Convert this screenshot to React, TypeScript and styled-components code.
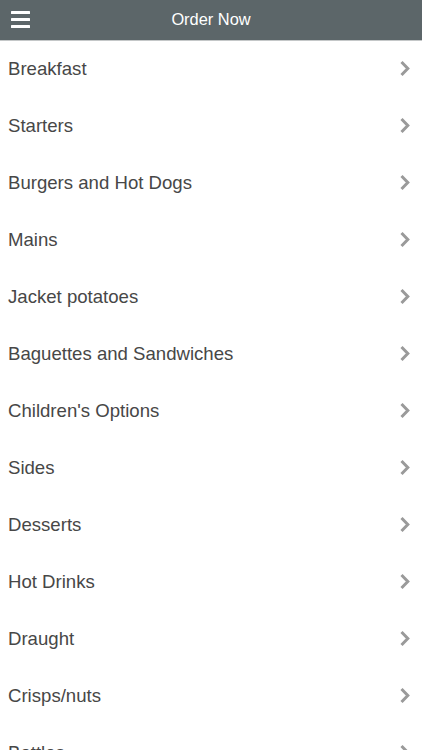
import React from "react";
import styled, { createGlobalStyle } from "styled-components";

const Global = createGlobalStyle`
  html, body { margin: 0; padding: 0; background: #fff; }
  body { font-family: "Liberation Sans", Arial, Helvetica, sans-serif; overflow: hidden; }
`;

const Page = styled.div`
  width: 422px;
  height: 750px;
  overflow: hidden;
  display: flex;
  flex-direction: column;
`;

const Header = styled.header`
  position: relative;
  height: 40px;
  flex: none;
  background: #5c6669;
  border-bottom: 1px solid #c4c7c8;
  display: flex;
  align-items: center;
  justify-content: center;
`;

const Title = styled.h1`
  margin: 0 0 2px;
  color: #fff;
  font-size: 16.4px;
  font-weight: normal;
`;

const MenuButton = styled.button`
  position: absolute;
  left: 11px;
  top: 11px;
  width: 19px;
  height: 17px;
  padding: 0;
  border: 0;
  background: none;
  display: flex;
  flex-direction: column;
  justify-content: space-between;
`;

const Bar = styled.span`
  display: block;
  height: 3px;
  background: #fff;
  border-radius: 0.5px;
`;

const List = styled.ul`
  list-style: none;
  margin: 0;
  padding: 0;
`;

const Row = styled.li`
  height: 57px;
  box-sizing: border-box;
  display: flex;
  align-items: center;
  justify-content: space-between;
  padding: 0 11px 2px 8px;
  color: #474747;
  font-size: 18.6px;
`;

const Chevron = () => (
  <svg width="12" height="17" viewBox="0 0 12 17">
    <path d="M2.5 2 L8.8 8.5 L2.5 15" fill="none" stroke="#9a9a9a" strokeWidth="3" />
  </svg>
);

const items = [
  "Breakfast",
  "Starters",
  "Burgers and Hot Dogs",
  "Mains",
  "Jacket potatoes",
  "Baguettes and Sandwiches",
  "Children's Options",
  "Sides",
  "Desserts",
  "Hot Drinks",
  "Draught",
  "Crisps/nuts",
  "Bottles",
];

export default function App() {
  return (
    <Page>
      <Global />
      <Header>
        <MenuButton aria-label="menu">
          <Bar />
          <Bar />
          <Bar />
        </MenuButton>
        <Title>Order Now</Title>
      </Header>
      <List>
        {items.map((it) => (
          <Row key={it}>
            <span>{it}</span>
            <Chevron />
          </Row>
        ))}
      </List>
    </Page>
  );
}
